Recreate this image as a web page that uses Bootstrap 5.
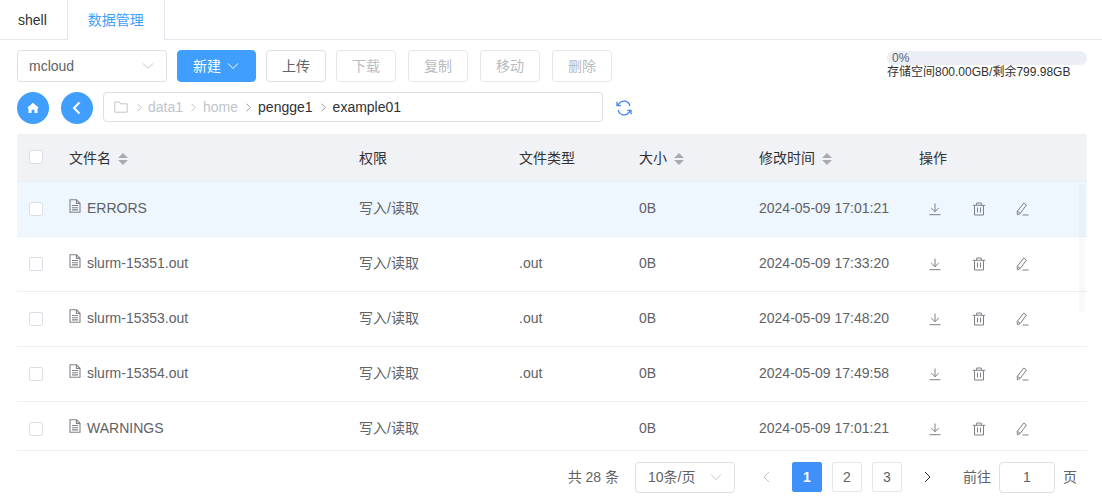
<!DOCTYPE html>
<html lang="zh">
<head>
<meta charset="utf-8">
<title>数据管理</title>
<link href="https://cdn.jsdelivr.net/npm/bootstrap@5.3.0/dist/css/bootstrap.min.css" rel="stylesheet">
<style>
html,body{height:504px;overflow:hidden;background:#fff}
body{font-family:"Liberation Sans","Noto Sans CJK SC",sans-serif;font-size:14px;color:#606266}
svg{display:block}
.tabbar{height:40px;border-bottom:1px solid #e4e7ed;flex-wrap:nowrap}
.tabbar .nav-link{height:39px;margin:0;padding:0 20px 0 18px;line-height:40px;color:#303133;font-size:14px;border:0;border-radius:0}
.tabbar .nav-link.active{width:98px;padding:0;text-align:center;color:#409eff;border-left:1px solid #e4e7ed;border-right:1px solid #e4e7ed;background:#fff;height:40px}
.work{padding:10px 15px 0 17px}
.pick{width:150px;height:32px;margin-right:10px;padding:0 12px 0 11px;border:1px solid #dcdfe6;border-radius:4px;color:#606266}
.pick-chev{color:#c0c4cc}
.tbtn{height:32px;width:60px;padding:0;font-size:14px;line-height:30px;color:#606266;background:#fff;border:1px solid #dcdfe6;border-radius:4px}
.tbtn.new{width:79px;padding-right:1px;background:#409eff;border-color:#409eff;color:#fff;margin-right:10px;gap:6px}
.tbtn.up{margin-right:10px}
.tbtn.off{color:#c0c4cc;border-color:#e4e7ed;opacity:1;margin-right:12px}
.tbtn.off:disabled{color:#b8bbc2;border-color:#e4e7ed;background:#fff;opacity:1}
.store{width:200px;margin-top:1px;font-size:12px;color:#303133;line-height:14px}
.store .progress{height:14px;background:#ebeef5;border-radius:7px;font-size:12px}
.pct{padding-left:5px;color:#606266;line-height:14px}
.row2{margin-top:10px;height:32px}
.circ{width:32px;height:32px;border-radius:50%;background:#409eff;color:#fff;border:0;padding:0;margin-right:12px}
.crumbbox{width:500px;height:30px;margin-left:-2px;padding:0 10px;border:1px solid #dcdfe6;border-radius:4px}
.crumbbox .breadcrumb{margin:0;font-size:14px;line-height:28px;flex-wrap:nowrap}
.crumbbox .breadcrumb-item{padding:0;color:#c0c4cc}
.crumbbox .breadcrumb-item.on{color:#303133}
.crumbbox .breadcrumb-item+.breadcrumb-item::before{display:none}
.sep{color:#a8abb2;margin:0 7px}
.sep.first{margin:0 6px 0 8px}
.folder{color:#c0c4cc}
.refresh{margin-left:13px;margin-top:-1px;background:none;border:0;padding:0;color:#3b82f6}
.tablewrap{height:317px;margin-top:10px;overflow:hidden;border-bottom:1px solid #ebeef5;position:relative}
.filetable{table-layout:fixed;width:100%;margin:0;font-size:14px;color:#606266;border-collapse:collapse}
.filetable th,.filetable td{padding:0 12px;vertical-align:middle;font-weight:400;border-bottom:1px solid #ebeef5;background:transparent;white-space:nowrap;box-shadow:none}
.filetable th{padding:3px 12px 0}
.filetable thead tr{height:47px;background:#f1f2f6}
.filetable thead th{color:#303133}
.filetable tbody tr{height:55px}
.filetable tbody tr.hov{background:#eef6fe}
.filetable .form-check-input{width:14px;height:14px;margin:0;display:block;border:1px solid #dcdfe6;border-radius:2px;background-color:#fff;float:none}
.filetable thead .form-check-input{margin-top:-3px}
.filetable tbody .form-check-input{margin-top:1px}
.sorter{display:inline-flex;flex-direction:column;gap:2px;vertical-align:middle;margin-left:7px;margin-top:-1px}
.sorter i{display:block;width:0;height:0;border-left:5px solid transparent;border-right:5px solid transparent}
.sorter i:first-child{border-bottom:5px solid #a8abb2}
.sorter i:last-child{border-top:5px solid #a8abb2}
.fname{display:inline-flex;align-items:center;gap:6px}
.fname svg{margin-top:-5px;color:#808288}
.ops{gap:30px;padding-left:9px;margin-top:1px;color:#7d8087}
.fakebar{position:absolute;left:1062px;top:50px;width:6px;height:128px;border-radius:3px;background:rgba(144,147,153,.06)}
.pager{height:30px;margin-top:11px;padding-right:10px;color:#606266}
.pagesize{width:100px;height:31px;margin:0 17px 0 16px;padding:0 12px;border:1px solid #dcdfe6;border-radius:4px}
.pager .pagination{margin:0;gap:10px}
.pager .page-link{width:30px;height:30px;padding:0;text-align:center;line-height:28px;color:#606266;border:1px solid #e4e7ed;border-radius:2px!important;font-size:14px;margin:0!important;background:#fff}
.pager .page-item.active .page-link{background:#3f90fb;border-color:#3f90fb;color:#fff;font-weight:700}
.pager .page-link.arrow{border:0;color:#303133;display:flex;align-items:center;justify-content:center}
.pager .page-item.disabled .page-link.arrow{color:#c0c4cc;background:#fff}
.goto{margin-left:21px}
.gobox{width:56px;height:31px;margin:0 8px;border:1px solid #dcdfe6;border-radius:4px;padding:0;text-align:center;font-size:14px;color:#606266;box-shadow:none}
</style>
</head>
<body>
<svg width="0" height="0" class="position-absolute">
  <symbol id="i-file" viewBox="0 0 12 14"><path d="M1 .8h6.6L11 4.200V13.200H1z M7.400 .8V4.400H11 M3 6.500H9 M3 8.700H9 M3 10.900H9" fill="none" stroke="currentColor" stroke-width="1.100"/></symbol>
  <symbol id="i-down" viewBox="0 0 14 14"><path d="M7 1.500V9.500 M3.200 6 7 9.700 10.800 6 M1.500 12.700H12.500" fill="none" stroke="currentColor" stroke-width="1"/></symbol>
  <symbol id="i-trash" viewBox="0 0 14 14"><path d="M2.500 3.300V13H11.500V3.300 M.8 3.300H13.200 M4.700 3V1H9.300V3 M5.500 5.500V10.500 M8.500 5.500V10.500" fill="none" stroke="currentColor" stroke-width="1"/></symbol>
  <symbol id="i-edit" viewBox="0 0 14 14"><path d="M7.800 1 10.400 3 4.200 11.500 1.400 12.800 1.200 9.500Z M1.500 9.400 4.200 11.400 M6.500 13H12.500" fill="none" stroke="currentColor" stroke-width="1"/></symbol>
  <symbol id="i-chev" viewBox="0 0 12 8"><path d="M1 1.500 6 6.500 11 1.500" fill="none" stroke="currentColor" stroke-width="1"/></symbol>
  <symbol id="i-right" viewBox="0 0 8 12"><path d="M2 1 7 6 2 11" fill="none" stroke="currentColor" stroke-width="1"/></symbol>
  <symbol id="i-left" viewBox="0 0 8 12"><path d="M6 1 1 6 6 11" fill="none" stroke="currentColor" stroke-width="1"/></symbol>
</svg>

<ul class="nav tabbar">
  <li class="nav-item"><a class="nav-link" href="#">shell</a></li>
  <li class="nav-item"><a class="nav-link active" href="#">数据管理</a></li>
</ul>

<div class="work">
  <div class="d-flex align-items-start">
    <div class="pick d-flex align-items-center justify-content-between flex-shrink-0">
      <span>mcloud</span>
      <svg class="pick-chev" width="12" height="8"><use href="#i-chev"/></svg>
    </div>
    <button class="btn tbtn new d-flex align-items-center justify-content-center"><span>新建</span><svg width="12" height="8"><use href="#i-chev"/></svg></button>
    <button class="btn tbtn up">上传</button>
    <button class="btn tbtn off" disabled>下载</button>
    <button class="btn tbtn off" disabled>复制</button>
    <button class="btn tbtn off" disabled>移动</button>
    <button class="btn tbtn off" disabled>删除</button>
    <div class="store ms-auto">
      <div class="progress"><span class="pct">0%</span></div>
      <div class="text-nowrap">存储空间800.00GB/剩余799.98GB</div>
    </div>
  </div>

  <div class="row2 d-flex align-items-start">
    <button class="circ d-flex align-items-center justify-content-center"><svg width="12" height="12" viewBox="0 0 12 12"><path d="M6 .8 11.500 5.600 10.500 6.700V11H7.400V7.800H4.600V11H1.500V6.700L.5 5.600Z" fill="currentColor"/></svg></button>
    <button class="circ d-flex align-items-center justify-content-center"><svg width="10" height="14" viewBox="0 0 10 14"><path d="M7.500 1.500 2 7 7.500 12.500" fill="none" stroke="currentColor" stroke-width="2"/></svg></button>
    <nav class="crumbbox d-flex align-items-center" aria-label="路径">
      <svg class="folder" width="14" height="12" viewBox="0 0 14 12"><path d="M.8 1h4.400l1.400 1.800h6.600v8.400H.8z" fill="none" stroke="currentColor" stroke-width="1"/></svg>
      <ol class="breadcrumb align-items-center">
        <li class="sep first d-flex"><svg width="6" height="9"><use href="#i-right"/></svg></li>
        <li class="breadcrumb-item">data1</li>
        <li class="sep d-flex"><svg width="6" height="9"><use href="#i-right"/></svg></li>
        <li class="breadcrumb-item">home</li>
        <li class="sep d-flex"><svg class="text-secondary" width="6" height="9"><use href="#i-right"/></svg></li>
        <li class="breadcrumb-item on">pengge1</li>
        <li class="sep d-flex"><svg class="text-secondary" width="6" height="9"><use href="#i-right"/></svg></li>
        <li class="breadcrumb-item on">example01</li>
      </ol>
    </nav>
    <button class="refresh align-self-center" aria-label="刷新"><svg width="16" height="16" viewBox="0 0 16 16"><path d="M13.800 6A6 6 0 0 0 3 3.600L1.800 5 M2.200 10A6 6 0 0 0 13 12.400L14.200 11" fill="none" stroke="currentColor" stroke-width="1.300"/><path d="M1 1.800V5.700H4.800 M15 14.200V10.300H11.200" fill="none" stroke="currentColor" stroke-width="1.300"/></svg></button>
  </div>

  <div class="tablewrap">
    <table class="table filetable">
      <colgroup><col style="width:40px"><col style="width:290px"><col style="width:160px"><col style="width:120px"><col style="width:120px"><col style="width:160px"><col style="width:180px"></colgroup>
      <thead>
        <tr>
          <th><input class="form-check-input" type="checkbox" aria-label="全选"></th>
          <th>文件名<span class="sorter"><i></i><i></i></span></th>
          <th>权限</th>
          <th>文件类型</th>
          <th>大小<span class="sorter"><i></i><i></i></span></th>
          <th>修改时间<span class="sorter"><i></i><i></i></span></th>
          <th>操作</th>
        </tr>
      </thead>
      <tbody>
        <tr class="hov">
          <td><input class="form-check-input" type="checkbox" aria-label="选择"></td>
          <td><span class="fname"><svg width="12" height="14"><use href="#i-file"/></svg>ERRORS</span></td>
          <td>写入/读取</td><td></td><td>0B</td><td>2024-05-09 17:01:21</td>
          <td><div class="ops d-flex"><svg width="14" height="14"><use href="#i-down"/></svg><svg width="14" height="14"><use href="#i-trash"/></svg><svg width="14" height="14"><use href="#i-edit"/></svg></div></td>
        </tr>
        <tr>
          <td><input class="form-check-input" type="checkbox" aria-label="选择"></td>
          <td><span class="fname"><svg width="12" height="14"><use href="#i-file"/></svg>slurm-15351.out</span></td>
          <td>写入/读取</td><td>.out</td><td>0B</td><td>2024-05-09 17:33:20</td>
          <td><div class="ops d-flex"><svg width="14" height="14"><use href="#i-down"/></svg><svg width="14" height="14"><use href="#i-trash"/></svg><svg width="14" height="14"><use href="#i-edit"/></svg></div></td>
        </tr>
        <tr>
          <td><input class="form-check-input" type="checkbox" aria-label="选择"></td>
          <td><span class="fname"><svg width="12" height="14"><use href="#i-file"/></svg>slurm-15353.out</span></td>
          <td>写入/读取</td><td>.out</td><td>0B</td><td>2024-05-09 17:48:20</td>
          <td><div class="ops d-flex"><svg width="14" height="14"><use href="#i-down"/></svg><svg width="14" height="14"><use href="#i-trash"/></svg><svg width="14" height="14"><use href="#i-edit"/></svg></div></td>
        </tr>
        <tr>
          <td><input class="form-check-input" type="checkbox" aria-label="选择"></td>
          <td><span class="fname"><svg width="12" height="14"><use href="#i-file"/></svg>slurm-15354.out</span></td>
          <td>写入/读取</td><td>.out</td><td>0B</td><td>2024-05-09 17:49:58</td>
          <td><div class="ops d-flex"><svg width="14" height="14"><use href="#i-down"/></svg><svg width="14" height="14"><use href="#i-trash"/></svg><svg width="14" height="14"><use href="#i-edit"/></svg></div></td>
        </tr>
        <tr>
          <td><input class="form-check-input" type="checkbox" aria-label="选择"></td>
          <td><span class="fname"><svg width="12" height="14"><use href="#i-file"/></svg>WARNINGS</span></td>
          <td>写入/读取</td><td></td><td>0B</td><td>2024-05-09 17:01:21</td>
          <td><div class="ops d-flex"><svg width="14" height="14"><use href="#i-down"/></svg><svg width="14" height="14"><use href="#i-trash"/></svg><svg width="14" height="14"><use href="#i-edit"/></svg></div></td>
        </tr>
      </tbody>
    </table>
    <div class="fakebar"></div>
  </div>

  <div class="pager d-flex align-items-center justify-content-end">
    <span>共 28 条</span>
    <div class="pagesize d-flex align-items-center justify-content-between"><span>10条/页</span><svg class="pick-chev" width="12" height="8"><use href="#i-chev"/></svg></div>
    <ul class="pagination">
      <li class="page-item disabled"><a class="page-link arrow" href="#" aria-label="上一页"><svg width="8" height="12"><use href="#i-left"/></svg></a></li>
      <li class="page-item active"><a class="page-link" href="#">1</a></li>
      <li class="page-item"><a class="page-link" href="#">2</a></li>
      <li class="page-item"><a class="page-link" href="#">3</a></li>
      <li class="page-item"><a class="page-link arrow" href="#" aria-label="下一页"><svg width="8" height="12"><use href="#i-right"/></svg></a></li>
    </ul>
    <span class="goto">前往</span>
    <input class="form-control gobox" value="1" aria-label="页码">
    <span>页</span>
  </div>
</div>
</body>
</html>
